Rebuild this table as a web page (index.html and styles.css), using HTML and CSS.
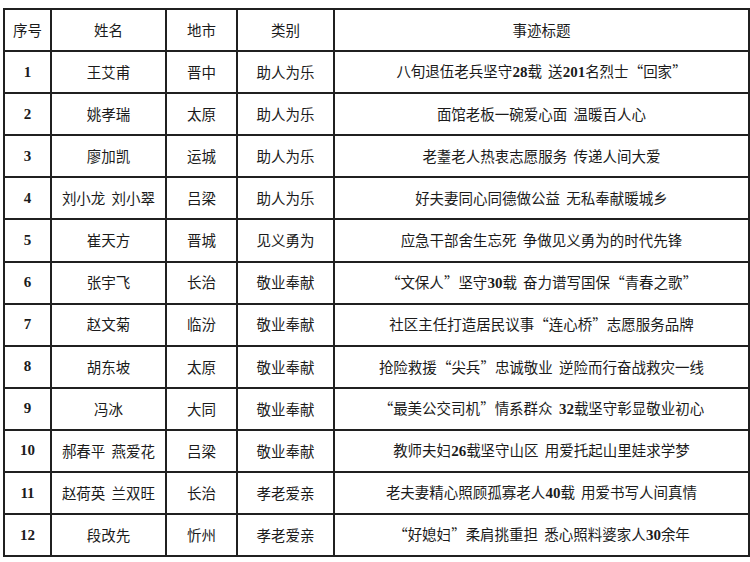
FILE: index.html
```html
<!DOCTYPE html>
<html lang="zh-CN">
<head>
<meta charset="utf-8">
<title>事迹列表</title>
<link rel="stylesheet" href="styles.css">
</head>
<body>
<table class="list">
  <colgroup>
    <col class="c-no"><col class="c-name"><col class="c-city"><col class="c-type"><col class="c-title">
  </colgroup>
  <thead>
    <tr><th>序号</th><th>姓名</th><th>地市</th><th>类别</th><th>事迹标题</th></tr>
  </thead>
  <tbody>
    <tr><td class="n">1</td><td>王艾甫</td><td>晋中</td><td>助人为乐</td><td>八旬退伍老兵坚守<span class="n">28</span>载 送<span class="n">201</span>名烈士<span class="q">“</span>回家<span class="q">”</span></td></tr>
    <tr><td class="n">2</td><td>姚孝瑞</td><td>太原</td><td>助人为乐</td><td>面馆老板一碗爱心面 温暖百人心</td></tr>
    <tr><td class="n">3</td><td>廖加凯</td><td>运城</td><td>助人为乐</td><td>老耋老人热衷志愿服务 传递人间大爱</td></tr>
    <tr><td class="n">4</td><td>刘小龙 刘小翠</td><td>吕梁</td><td>助人为乐</td><td>好夫妻同心同德做公益 无私奉献暖城乡</td></tr>
    <tr><td class="n">5</td><td>崔天方</td><td>晋城</td><td>见义勇为</td><td>应急干部舍生忘死 争做见义勇为的时代先锋</td></tr>
    <tr><td class="n">6</td><td>张宇飞</td><td>长治</td><td>敬业奉献</td><td><span class="q">“</span>文保人<span class="q">”</span>坚守<span class="n">30</span>载 奋力谱写国保<span class="q">“</span>青春之歌<span class="q">”</span></td></tr>
    <tr><td class="n">7</td><td>赵文菊</td><td>临汾</td><td>敬业奉献</td><td>社区主任打造居民议事<span class="q">“</span>连心桥<span class="q">”</span>志愿服务品牌</td></tr>
    <tr><td class="n">8</td><td>胡东坡</td><td>太原</td><td>敬业奉献</td><td>抢险救援<span class="q">“</span>尖兵<span class="q">”</span>忠诚敬业 逆险而行奋战救灾一线</td></tr>
    <tr><td class="n">9</td><td>冯冰</td><td>大同</td><td>敬业奉献</td><td><span class="q">“</span>最美公交司机<span class="q">”</span>情系群众 <span class="n">32</span>载坚守彰显敬业初心</td></tr>
    <tr><td class="n">10</td><td>郝春平 燕爱花</td><td>吕梁</td><td>敬业奉献</td><td>教师夫妇<span class="n">26</span>载坚守山区 用爱托起山里娃求学梦</td></tr>
    <tr><td class="n">11</td><td>赵荷英 兰双旺</td><td>长治</td><td>孝老爱亲</td><td>老夫妻精心照顾孤寡老人<span class="n">40</span>载 用爱书写人间真情</td></tr>
    <tr><td class="n">12</td><td>段改先</td><td>忻州</td><td>孝老爱亲</td><td><span class="q">“</span>好媳妇<span class="q">”</span>柔肩挑重担 悉心照料婆家人<span class="n">30</span>余年</td></tr>
  </tbody>
</table>
</body>
</html>
```

FILE: styles.css
```css
html, body {
  margin: 0;
  padding: 0;
  background: #ffffff;
}

body {
  padding: 8px 0 0 3px;
  font-family: "Noto Sans CJK SC", sans-serif;
  color: #1b1b1b;
}

.list {
  border-collapse: collapse;
  table-layout: fixed;
  width: 745px;
}

.c-no { width: 47px; }
.c-name { width: 115px; }
.c-city { width: 71px; }
.c-type { width: 97px; }
.c-title { width: 415px; }

.list tr {
  height: 42.1px;
}

.list th,
.list td {
  border: 2px solid #202020;
  padding: 0;
  text-align: center;
  vertical-align: middle;
  font-size: 14.5px;
  font-weight: 400;
  line-height: 1;
  white-space: nowrap;
  word-spacing: 3px;
}

.list .n {
  font-family: "Liberation Serif", serif;
  font-weight: 700;
  font-size: 15px;
}

.list .q {
  font-family: "Noto Sans CJK SC", sans-serif;
}
```
